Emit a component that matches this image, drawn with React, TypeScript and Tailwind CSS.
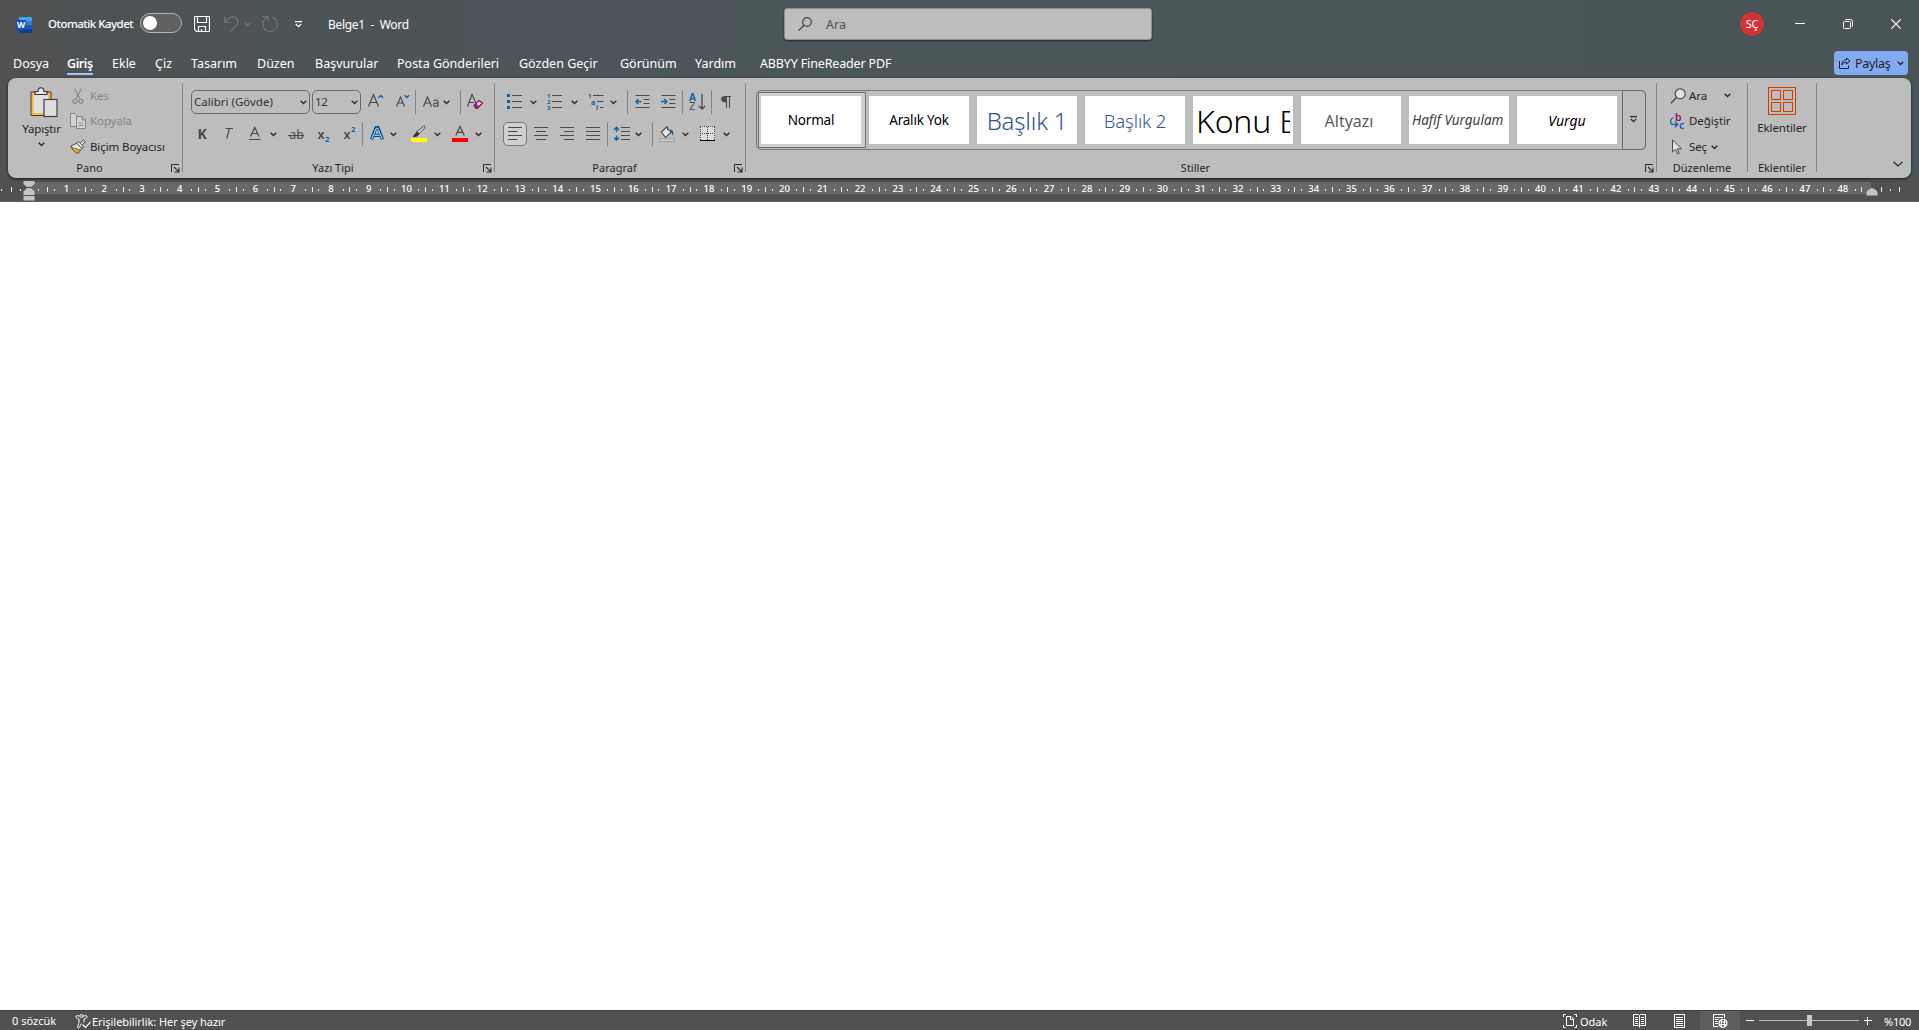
import React from 'react';

const INK = '#4a4a4a';
const BLUE = '#0f64a8';

interface ChevronProps {
    className?: string;
    color?: string;
}

const Chevron: React.FC<ChevronProps> = ({ className = '', color = '#2b2b2b' }) => (
    <svg width="7" height="5" viewBox="0 0 7 5" className={`shrink-0 ${className}`}>
        <path d="M0.7 0.8 L3.5 3.6 L6.3 0.8" fill="none" stroke={color} strokeWidth="1.4" />
    </svg>
);

const Separator: React.FC<{ className?: string }> = ({ className = '' }) => (
    <div className={`h-6 w-px shrink-0 bg-[#858585] ${className}`} />
);

const Launcher: React.FC = () => (
    <svg width="9" height="9" viewBox="0 0 9 9" className="shrink-0">
        <path d="M0.5 8 V0.5 H8" fill="none" stroke="#2b2b2b" />
        <path d="M3 3 L7.5 7.5 M8 3.5 V8 H3.5" fill="none" stroke="#2b2b2b" strokeWidth="1.1" />
    </svg>
);

interface GlyphProps {
    w: number;
    className?: string;
    children: React.ReactNode;
}

// Every toolbar glyph is drawn on a 24px tall row
const Glyph: React.FC<GlyphProps> = ({ w, className = '', children }) => (
    <svg
        width={w}
        height="24"
        viewBox={`0 0 ${w} 24`}
        fill="none"
        className={`shrink-0 overflow-visible ${className}`}
    >
        {children}
    </svg>
);

const TitleBar: React.FC = () => (
    <div className="flex h-12 items-center text-white">
        <svg width="16" height="16" viewBox="0 0 16 16" className="ml-4 mt-px shrink-0">
            <rect x="3" y="0" width="13" height="16" rx="1" fill="#185abd" />
            <path d="M4 0 H15 a1 1 0 0 1 1 1 V4 H3 V1 a1 1 0 0 1 1-1" fill="#41a5ee" />
            <rect x="3" y="4" width="13" height="4" fill="#2b7cd3" />
            <path d="M3 12 H16 V15 a1 1 0 0 1 -1 1 H4 a1 1 0 0 1 -1-1" fill="#103f91" />
            <rect x="0" y="3" width="10" height="10" rx="1" fill="#1a4fae" />
            <text x="5" y="11" fontSize="8.5" fontWeight="700" fill="#fff" textAnchor="middle">W</text>
        </svg>
        <span className="ml-4 w-[92px] whitespace-nowrap text-[11.5px] font-medium tracking-[-0.52px]">Otomatik Kaydet</span>
        <div className="mt-[-2px] flex h-5 w-[42px] items-center rounded-full border border-[#b5b5b5] bg-[#5f6062] pl-[2px]">
            <div className="h-[14px] w-[14px] rounded-full bg-white" />
        </div>
        <svg width="16" height="16" viewBox="0 0 16 16" fill="none" stroke="#fff" className="ml-3">
            <path d="M0.5 0.5 H15.5 V15.5 H2.5 L0.5 13.5 Z" strokeWidth="1.2" />
            <path d="M3.5 0.5 V6.5 H12.5 V0.5 M4.5 15.5 V10.5 H11.5 V15.5 M7.5 13 V15.5" strokeWidth="1.2" />
        </svg>
        <svg width="15" height="16" viewBox="0 0 15 16" fill="none" stroke="#707476" strokeWidth="1.2" className="ml-[14px]">
            <path d="M0.6 0.5 V6.5 H6.5 M0.6 6.3 L5 2.2 C8 -0.3 13.5 1 13.8 5 C14 9 10 12 6.8 15.5" />
        </svg>
        <Chevron className="ml-[5px]" color="#707476" />
        <svg width="16" height="16" viewBox="0 0 16 16" fill="none" stroke="#707476" strokeWidth="1.2" className="ml-[11px]">
            <path d="M0.5 0.6 H6 V6 M5.8 1.2 C-0.5 3.5 -0.5 12.5 5.5 15 C11 17 16 12.5 15.3 7.5 C15 4.5 12.8 2.2 10.5 1.3" />
        </svg>
        <svg width="7" height="7" viewBox="0 0 7 7" fill="none" stroke="#fff" strokeWidth="1.2" className="ml-[17px]">
            <path d="M0 0.6 H7 M0.8 3 L3.5 5.6 L6.2 3" />
        </svg>
        <span className="ml-[26px] mt-[2px] w-[456px] whitespace-pre text-xs tracking-[-0.3px]">Belge1  -  Word</span>
        <div className="flex h-8 w-[368px] items-center rounded-[3px] border border-[#8b8f90] bg-[#bdbdbd] shadow-[0_1px_2px_rgba(0,0,0,0.5)]">
            <svg width="14" height="14" viewBox="0 0 14 14" fill="none" stroke="#444" strokeWidth="1.2" className="ml-[13px]">
                <circle cx="9" cy="5" r="4.3" />
                <path d="M6 8.2 L0.5 13.6" />
            </svg>
            <span className="ml-[14px] mt-[2px] text-[12.5px] text-[#4f4f4f]">Ara</span>
        </div>
        <div className="ml-auto mr-[31px] flex h-6 w-6 items-center justify-center rounded-full bg-[#d13438] text-[11px] tracking-[-0.3px]">SÇ</div>
        <svg width="10" height="10" viewBox="0 0 10 10" className="mr-[38px]">
            <path d="M0 4.5 H10" stroke="#fff" />
        </svg>
        <svg width="10" height="10" viewBox="0 0 10 10" fill="none" stroke="#fff" className="mr-[38px]">
            <rect x="0.5" y="2.5" width="7" height="7" rx="1" />
            <path d="M2.5 0.5 H7.5 a2 2 0 0 1 2 2 V7.5" />
        </svg>
        <svg width="10" height="10" viewBox="0 0 10 10" className="mr-[18px]">
            <path d="M0.3 0.3 L9.7 9.7 M9.7 0.3 L0.3 9.7" stroke="#fff" strokeWidth="1.1" />
        </svg>
    </div>
);

const TABS = [
    { label: 'Dosya', cls: 'w-[54px]' },
    { label: 'Giriş', cls: 'w-[45px]', active: true },
    { label: 'Ekle', cls: 'w-[43px]' },
    { label: 'Çiz', cls: 'w-[36px]' },
    { label: 'Tasarım', cls: 'w-[66px]' },
    { label: 'Düzen', cls: 'w-[58px]' },
    { label: 'Başvurular', cls: 'w-[82px]' },
    { label: 'Posta Gönderileri', cls: 'w-[122px]' },
    { label: 'Gözden Geçir', cls: 'w-[101px]' },
    { label: 'Görünüm', cls: 'w-[75px]' },
    { label: 'Yardım', cls: 'w-[65px]' },
    { label: 'ABBYY FineReader PDF', cls: 'w-[160px] tracking-[-0.15px]' },
];

const TabBar: React.FC = () => (
    <div className="flex h-[30px] items-start pl-[13px] pr-[11px] text-white">
        {TABS.map((tab) => (
            <div key={tab.label} className={`flex shrink-0 pt-[5px] ${tab.cls}`}>
                <div className={`h-[22px] whitespace-nowrap text-[12.5px] leading-[22px] ${tab.active ? 'border-b-2 border-[#a9c1f0] font-semibold tracking-[-0.4px]' : ''}`}>
                    {tab.label}
                </div>
            </div>
        ))}
        <div className="ml-auto mt-[3px] flex h-6 w-[74px] items-center rounded bg-[#84aaf2] text-[#1f1f1f]">
            <svg width="12" height="12" viewBox="0 0 12 12" fill="none" stroke="#1f1f1f" className="ml-[5px]">
                <path d="M0.5 4 V11.5 H9.5 V8.5" />
                <path d="M7.5 1 L11 4 L7.5 7 V5.3 C5.5 5.2 4 6 2.8 8 C3 5 4.6 2.9 7.5 2.7 Z" />
            </svg>
            <span className="ml-1 mt-[2px] w-[42px] text-[12.5px] tracking-[-0.3px]">Paylaş</span>
            <Chevron />
        </div>
    </div>
);

interface GroupProps {
    label: string;
    className: string;
    launcher?: boolean;
    children: React.ReactNode;
}

const Group: React.FC<GroupProps> = ({ label, className, launcher, children }) => (
    <div className={`flex shrink-0 pt-[5px] ${className}`}>
        <div className="flex min-w-0 flex-1 flex-col">
            <div className="h-[78px]">{children}</div>
            <div className={`flex h-[14px] items-center ${launcher ? 'pr-[2px]' : ''}`}>
                <div className="flex-1 text-center text-[11px] leading-[14px]">{label}</div>
                {launcher && <Launcher />}
            </div>
        </div>
        <div className="h-[89px] w-px bg-[#858585]" />
    </div>
);

const ClipboardGroup: React.FC = () => (
    <Group label="Pano" className="w-[175px]" launcher>
        <div className="flex">
            <div className="ml-[10px] flex w-[47px] flex-col items-center pt-1">
                <svg width="28" height="31" viewBox="0 0 28 31" className="ml-[5px]">
                    <path d="M1 5 H21 V28.5 H1 Z" fill="#f5be55" stroke="#4a3a1a" />
                    <path d="M4 7 H18 V26 H4 Z" fill="#e0e0e0" />
                    <path d="M5 7.5 V4.5 H8 C8.3 -0.5 13.7 -0.5 14 4.5 H17 V7.5 Z" fill="#e6e6e6" stroke="#333" strokeWidth="1.2" />
                    <rect x="14" y="12.5" width="13" height="17" fill="#dedede" stroke="#3f3f3f" strokeWidth="1.2" />
                </svg>
                <span className="mt-[3px] text-[11.5px] leading-[16px] tracking-[-0.15px]">Yapıştır</span>
                <Chevron className="mt-[5px]" />
            </div>
            <div className="ml-[5px] flex flex-col text-[11.5px] tracking-[-0.1px]">
                <div className="flex h-[25px] items-center text-[#868686]">
                    <svg width="16" height="16" viewBox="0 0 16 16" fill="none" stroke="#868686" strokeWidth="1.1">
                        <path d="M4.5 0.5 L10 11 M11.5 0.5 L6 11" />
                        <circle cx="5" cy="13.3" r="2" />
                        <circle cx="11" cy="13.3" r="2" />
                    </svg>
                    <span className="ml-1">Kes</span>
                </div>
                <div className="flex h-[26px] items-center text-[#868686]">
                    <svg width="16" height="16" viewBox="0 0 16 16" fill="#d2d2d2" stroke="#868686">
                        <path d="M0.5 0.5 H4.5 L6.5 2.5 V13.5 H0.5 Z" />
                        <path d="M6.5 3.5 H12 L15.5 7 V15.5 H6.5 Z M12 3.5 V7 H15.5" />
                        <path d="M8.5 10 H13.5 M8.5 12.5 H13.5" />
                    </svg>
                    <span className="ml-1">Kopyala</span>
                </div>
                <div className="flex h-[26px] items-center">
                    <svg width="16" height="16" viewBox="0 0 16 16">
                        <path d="M0.8 7 L7 4.2 L12 9.5 L8 14.5 C5 13.5 2.5 10.5 0.8 7 Z" fill="#e8e8e8" stroke="#4a4a4a" />
                        <path d="M1.5 8.2 C5 9.8 7.5 10 10.3 11 L8 14.5 C5 13.5 3 11.5 1.5 8.2 Z" fill="#e8ae3c" stroke="#6a4c10" strokeWidth="0.8" />
                        <path d="M6.5 4.2 L8.5 2.7 L13.5 7.7 L12 9.5 Z" fill="#f0f0f0" stroke="#4a4a4a" />
                        <path d="M10.2 4 L13.5 0.8 L15.4 2.6 L12.2 6" fill="#ddd" stroke="#4a4a4a" />
                    </svg>
                    <span className="ml-1 whitespace-nowrap">Biçim Boyacısı</span>
                </div>
            </div>
        </div>
    </Group>
);

const FontGroup: React.FC = () => (
    <Group label="Yazı Tipi" className="w-[312px]" launcher>
        <div className="flex pl-2 pt-[7px]">
            <div className="flex h-6 w-[119px] items-center justify-between rounded-[5px] border border-[#6a6a6a] pl-[2px] pr-[2px] text-[11.5px] text-[#333]">
                Calibri (Gövde)
                <Chevron />
            </div>
            <div className="ml-[2px] flex h-6 w-[49px] items-center justify-between rounded-[5px] border border-[#6a6a6a] pl-[2px] pr-[2px] text-[11.5px] tracking-[-0.3px] text-[#333]">
                12
                <Chevron />
            </div>
            <Glyph w={16} className="ml-[7px]">
                <path d="M0.5 16.5 L5.5 4.5 L10.5 16.5 M2.3 12.5 H8.7" stroke={INK} strokeWidth="1.2" />
                <path d="M10.5 7.8 L12.8 5.5 L15 7.8" stroke={BLUE} strokeWidth="1.4" />
            </Glyph>
            <Glyph w={14} className="ml-3">
                <path d="M0.5 16.5 L4.5 7 L8.5 16.5 M2 13 H7" stroke={INK} strokeWidth="1.2" />
                <path d="M8.5 5.3 L10.8 7.6 L13 5.3" stroke={BLUE} strokeWidth="1.4" />
            </Glyph>
            <Separator className="ml-[5px]" />
            <Glyph w={16} className="ml-[7px]">
                <path d="M0.5 16.5 L4.5 7 L8.5 16.5 M2 13 H7" stroke={INK} strokeWidth="1.2" />
                <path d="M10.5 10.8 C12.5 9.3 15 9.8 15 12 V16.5 M15 12.9 C12 12.9 10.3 13.3 10.4 15 C10.6 17 14.4 16.8 15 14.3" stroke={INK} strokeWidth="1.1" />
            </Glyph>
            <Chevron className="ml-1 mt-[10px]" />
            <Separator className="ml-[10px]" />
            <Glyph w={16} className="ml-[6px]">
                <path d="M0.5 16.5 L5 4.5 L9 13 M2.3 12.5 H7" stroke={INK} strokeWidth="1.2" />
                <path d="M7 15.5 L12 10.5 L15.5 13 L10.5 18.3 H9 Z" fill="#e2d3dc" stroke="#8c1460" strokeWidth="1.3" />
                <path d="M7 15.5 L9 13.5 L12.3 16.5 L10.5 18.3 H9 Z" fill="#a02070" />
            </Glyph>
        </div>
        <div className="flex pl-[15px] pt-2">
            <Glyph w={8}>
                <text x="-0.5" y="17" fontSize="14" fontWeight="700" fill={INK}>K</text>
            </Glyph>
            <Glyph w={9} className="ml-[18px]">
                <path d="M1.5 6.5 H9 M5.3 6.5 L2.8 16.5" stroke={INK} strokeWidth="1.2" />
            </Glyph>
            <Glyph w={12} className="ml-4">
                <path d="M1.5 14.5 L5.8 5.5 L10 14.5 M3 11.5 H8.7" stroke={INK} strokeWidth="1.2" />
                <path d="M0 17.5 H11.5" stroke={INK} />
            </Glyph>
            <Chevron className="ml-[9px] mt-[10px]" />
            <Glyph w={16} className="ml-[11px]">
                <text x="1.2" y="17" fontSize="12.5" fill={INK}>ab</text>
                <path d="M0 13.5 H16" stroke={INK} />
            </Glyph>
            <Glyph w={12} className="ml-[14px]">
                <text x="-0.5" y="17" fontSize="12.5" fontWeight="600" fill={INK}>x</text>
                <text x="7" y="19.5" fontSize="7.5" fontWeight="700" fill={BLUE}>2</text>
            </Glyph>
            <Glyph w={12} className="ml-[14px]">
                <text x="-0.5" y="17" fontSize="12.5" fontWeight="600" fill={INK}>x</text>
                <text x="7" y="9.5" fontSize="7.5" fontWeight="700" fill={BLUE}>2</text>
            </Glyph>
            <Separator className="ml-[6px]" />
            <Glyph w={14} className="ml-[7px]">
                <path d="M1.5 17.3 L6 5.7 H8 L12.5 17.3 M4 13.3 H10" stroke="#a9d2f0" strokeWidth="4.5" />
                <path d="M1.5 17.3 L6 5.7 H8 L12.5 17.3 M4 13.3 H10" stroke="#0b4a80" strokeWidth="3.2" />
                <path d="M1.8 16.8 L6.3 6.2 H7.7 L12.2 16.8 M4.3 13.3 H9.7" stroke="#cfe5f6" strokeWidth="1" />
            </Glyph>
            <Chevron className="ml-[6px] mt-[10px]" />
            <Glyph w={16} className="ml-[14px]">
                <rect x="0" y="16" width="16" height="4" fill="#ffff00" />
                <path d="M6 9.5 L12.5 4.3 C14 3.5 14.5 5 13.5 6 L8 12 Z" fill="#d8d8d8" stroke={INK} />
                <path d="M6.2 9.7 L8 12 C7 14 5 15 2 14.5 C4 13.5 3.8 11 6.2 9.7 Z" fill="#333" stroke="#333" strokeWidth="0.8" />
            </Glyph>
            <Chevron className="ml-[7px] mt-[10px]" />
            <Glyph w={16} className="ml-[11px]">
                <path d="M3.8 13.5 L8 4.5 L12.3 13.5 M5.3 10.3 H10.8" stroke={INK} strokeWidth="1.2" />
                <rect x="0" y="16" width="16" height="4" fill="#ff0000" />
            </Glyph>
            <Chevron className="ml-[7px] mt-[10px]" />
        </div>
    </Group>
);

const ParagraphGroup: React.FC = () => (
    <Group label="Paragraf" className="w-[251px]" launcher>
        <div className="flex pl-3 pt-[7px]">
            <Glyph w={16}>
                <path d="M0 4 h3 v3 h-3 Z M0 10 h3 v3 h-3 Z M0 16 h3 v3 h-3 Z" fill={BLUE} />
                <path d="M5 5.5 H15 M5 11.5 H15 M5 17.5 H15" stroke={INK} />
            </Glyph>
            <Chevron className="ml-[7px] mt-[10px]" />
            <Glyph w={16} className="ml-[10px]">
                <text x="0" y="8" fontSize="6" fontWeight="700" fill={BLUE}>1</text>
                <text x="0" y="14" fontSize="6" fontWeight="700" fill={BLUE}>2</text>
                <text x="0" y="20" fontSize="6" fontWeight="700" fill={BLUE}>3</text>
                <path d="M5 5.5 H15 M5 11.5 H15 M5 17.5 H15" stroke={INK} />
            </Glyph>
            <Chevron className="ml-2 mt-[10px]" />
            <Glyph w={16} className="ml-[10px]">
                <text x="0" y="8" fontSize="6" fontWeight="700" fill={BLUE}>1</text>
                <text x="3" y="14.5" fontSize="7" fontWeight="700" fill={BLUE}>a</text>
                <text x="8" y="20" fontSize="7" fontWeight="700" fill={BLUE}>i</text>
                <path d="M5 5.5 H15.5 M9 11.5 H15.5 M12 17.5 H15.5" stroke={INK} />
            </Glyph>
            <Chevron className="ml-[6px] mt-[10px]" />
            <Separator className="ml-[10px]" />
            <Glyph w={15} className="ml-[7px]">
                <path d="M0.5 5.5 H14.5 M8.5 9.5 H14.5 M8.5 13.5 H14.5 M0.5 17.5 H14.5" stroke={INK} />
                <path d="M6.5 11.5 H0.8 M3.3 9 L0.8 11.5 L3.3 14" stroke={BLUE} strokeWidth="1.3" />
            </Glyph>
            <Glyph w={15} className="ml-[11px]">
                <path d="M0.5 5.5 H14.5 M8.5 9.5 H14.5 M8.5 13.5 H14.5 M0.5 17.5 H14.5" stroke={INK} />
                <path d="M0 11.5 H5.8 M3.3 9 L5.8 11.5 L3.3 14" stroke={BLUE} strokeWidth="1.3" />
            </Glyph>
            <Separator className="ml-[6px]" />
            <Glyph w={17} className="ml-[6px]">
                <text x="0" y="11" fontSize="10" fontWeight="700" fill={BLUE}>A</text>
                <text x="0.2" y="20" fontSize="10.5" fill={INK}>Z</text>
                <path d="M13 4 V19 M10 16 L13 19 L16 16" stroke={INK} strokeWidth="1.3" />
            </Glyph>
            <Separator className="ml-[5px]" />
            <Glyph w={10} className="ml-[9px]">
                <path d="M5 6 V12.5 C-1.5 12.5 -1.5 6 4 6 Z" fill={INK} />
                <path d="M3.5 6.5 H10 M5.5 6 V18 M8.5 6 V18" stroke={INK} />
            </Glyph>
        </div>
        <div className="flex pl-2 pt-2">
            <div className="h-6 w-6 rounded-[5px] border border-[#787878] bg-[#d0d0d0]">
                <Glyph w={22} className="mt-[-1px]">
                    <path d="M4 5.5 H18 M4 9.5 H13.5 M4 13.5 H18 M4 17.5 H13.5" stroke={INK} />
                </Glyph>
            </div>
            <Glyph w={14} className="ml-[7px]">
                <path d="M0 5.5 H14 M2 9.5 H12 M0 13.5 H14 M2 17.5 H12" stroke={INK} />
            </Glyph>
            <Glyph w={14} className="ml-3">
                <path d="M0 5.5 H14 M4 9.5 H14 M0 13.5 H14 M4 17.5 H14" stroke={INK} />
            </Glyph>
            <Glyph w={14} className="ml-3">
                <path d="M0 5.5 H14 M0 9.5 H14 M0 13.5 H14 M0 17.5 H14" stroke={INK} />
            </Glyph>
            <Separator className="ml-[7px]" />
            <Glyph w={16} className="ml-[6px]">
                <path d="M2.5 5.5 V10 M2.5 13.5 V18 M0 8 L2.5 5.3 L5 8 M0 15.5 L2.5 18.2 L5 15.5" stroke={BLUE} strokeWidth="1.3" />
                <path d="M7 5.5 H16 M7 9.5 H16 M7 13.5 H16 M7 17.5 H16" stroke={INK} />
            </Glyph>
            <Chevron className="ml-[5px] mt-[10px]" />
            <Separator className="ml-[10px]" />
            <Glyph w={16} className="ml-[6px]">
                <path d="M2.5 10 L7.5 5 L12 10.5 L6.5 15.5 Z" fill="#e4e4e4" stroke={INK} strokeWidth="1.1" />
                <path d="M8.5 8 V4.5" stroke={INK} />
                <path d="M11.5 7.5 C14.5 8 14.8 11.5 14 14 C13 12 12.5 10.5 11 9 Z" fill={BLUE} />
                <rect x="0.5" y="17" width="15" height="2.5" fill="#d6d6d6" stroke="#999" />
            </Glyph>
            <Chevron className="ml-[7px] mt-[10px]" />
            <Glyph w={15} className="ml-[11px]">
                <rect x="0" y="4" width="15" height="15" fill="#dcdcdc" />
                <path d="M0.5 5 V18 M7.5 5 V18 M14.5 5 V18 M0 4.5 H15 M0 11.5 H15" stroke="#444" strokeDasharray="1 1" />
                <path d="M0 18.5 H15" stroke="#000" />
            </Glyph>
            <Chevron className="ml-2 mt-[10px]" />
        </div>
    </Group>
);

const STYLES = [
    { name: 'Normal', cls: 'text-[13.5px] tracking-[-0.2px] text-black justify-center' },
    { name: 'Aralık Yok', cls: 'text-[13.5px] tracking-[-0.2px] text-black justify-center' },
    { name: 'Başlık 1', cls: 'text-[24px] tracking-[-0.2px] font-light text-[#2f5496] justify-center' },
    { name: 'Başlık 2', cls: 'text-[18.5px] tracking-[-0.1px] font-light text-[#2f5496] justify-center' },
    { name: 'Konu B', cls: 'text-[32px] tracking-[-0.2px] font-light text-black' },
    { name: 'Altyazı', cls: 'text-[16px] text-[#5a5a5a] justify-center pr-1' },
    { name: 'Hafif Vurgulam', cls: 'text-[13.5px] italic text-[#404040]' },
    { name: 'Vurgu', cls: 'text-[14px] italic text-black justify-center' },
];

const StylesGroup: React.FC = () => (
    <Group label="Stiller" className="w-[911px]" launcher>
        <div className="pl-[10px] pt-[7px]">
            <div className="flex h-[60px] w-[890px] rounded-[5px] border border-[#7b7b7b] pl-px">
                {STYLES.map((style, i) => (
                    <div
                        key={style.name}
                        className={`my-px h-14 w-[108px] shrink-0 pl-[3px] pt-[4px] ${i === 0 ? 'bg-[#cfcfcf] outline-1 -outline-offset-1 outline-[#6f6f6f]' : ''}`}
                    >
                        <div className="h-12 w-[100px] bg-white px-[3px]">
                            <div className={`flex h-full items-center overflow-hidden whitespace-nowrap pt-px ${style.cls}`}>
                                {style.name}
                            </div>
                        </div>
                    </div>
                ))}
                <div className="my-[-1px] ml-auto mr-[-1px] flex w-6 items-center justify-center rounded-r-[5px] border border-[#6a6a6a]">
                    <svg width="7" height="7" viewBox="0 0 7 7" fill="none" stroke="#2b2b2b" strokeWidth="1.2" className="mb-px mr-px">
                        <path d="M0 0.6 H7 M0.8 3 L3.5 5.6 L6.2 3" />
                    </svg>
                </div>
            </div>
        </div>
    </Group>
);

const EditingGroup: React.FC = () => (
    <Group label="Düzenleme" className="w-[91px]">
        <div className="flex flex-col pl-[13px] text-[11.5px] tracking-[-0.1px]">
            <div className="flex h-[25px] items-center">
                <svg width="16" height="16" viewBox="0 0 16 16" fill="none" stroke="#4a4a4a" strokeWidth="1.2">
                    <circle cx="10.2" cy="5.8" r="5" fill="#e0e0e0" />
                    <path d="M6.5 9.5 L0.8 15.2" strokeWidth="1.5" />
                </svg>
                <span className="ml-[3px] w-[35px]">Ara</span>
                <Chevron />
            </div>
            <div className="flex h-[26px] items-center">
                <svg width="16" height="16" viewBox="0 0 16 16" fill="none">
                    <text x="5" y="8" fontSize="10.5" fontWeight="600" fill="#8c1460">b</text>
                    <text x="9" y="15.5" fontSize="10.5" fontWeight="600" fill={BLUE}>c</text>
                    <path d="M3.5 4.5 C-0.5 6 -0.5 11.5 4 11.5 H7.5 M5 8.8 L7.8 11.5 L5 14.2" stroke={BLUE} strokeWidth="1.3" />
                </svg>
                <span className="ml-[3px]">Değiştir</span>
            </div>
            <div className="flex h-[26px] items-center">
                <svg width="16" height="16" viewBox="0 0 16 16">
                    <path d="M2.5 0.8 V13 L5.5 10.3 L7.5 15 L9.3 14.2 L7.3 9.8 H11.5 Z" fill="#e4e4e4" stroke="#4a4a4a" />
                </svg>
                <span className="ml-[3px] mr-1">Seç</span>
                <Chevron />
            </div>
        </div>
    </Group>
);

const AddinsGroup: React.FC = () => (
    <Group label="Eklentiler" className="w-[69px]">
        <div className="flex flex-col items-center pt-1">
            <svg width="28" height="28" viewBox="0 0 28 28" fill="none" stroke="#d83b01">
                <rect x="0.5" y="0.5" width="27" height="27" />
                <rect x="3.5" y="3.5" width="9" height="9" />
                <rect x="15.5" y="3.5" width="9" height="9" />
                <rect x="3.5" y="15.5" width="9" height="9" />
                <rect x="15.5" y="15.5" width="9" height="9" />
            </svg>
            <span className="mt-[5px] text-[11.5px] leading-4 tracking-[-0.1px]">Eklentiler</span>
        </div>
    </Group>
);

const Ribbon: React.FC = () => (
    <div className="relative z-10 mx-2 flex h-[100px] rounded-lg bg-[#bdbdbd] text-[#262626] shadow-[0_1px_3px_rgba(0,0,0,0.7)]">
        <ClipboardGroup />
        <FontGroup />
        <ParagraphGroup />
        <StylesGroup />
        <EditingGroup />
        <AddinsGroup />
        <svg width="10" height="6" viewBox="0 0 10 6" className="mb-[11px] ml-auto mr-2 self-end">
            <path d="M0.5 0.7 L5 5 L9.5 0.7" fill="none" stroke="#2b2b2b" strokeWidth="1.2" />
        </svg>
    </div>
);

const Dot: React.FC = () => <div className="h-[2px] w-px bg-[#e8e8e8]" />;
const Tick: React.FC = () => <div className="h-[5px] w-px bg-[#e8e8e8]" />;

const RULER_NUMBERS = Array.from({ length: 48 }, (_, i) => i + 1);

const Ruler: React.FC = () => (
    <div className="flex h-6 items-start border-b border-[#625b5c] bg-[#515151] pt-1">
        <div className="flex h-3 w-[29px] items-center justify-between pl-px pr-2 pt-[3px]">
            <Dot />
            <Tick />
            <Dot />
        </div>
        <div className="relative flex h-3 w-[1842px] items-center bg-[#686868] pt-[3px] text-white">
            <svg width="12" height="21" viewBox="0 0 12 21" className="absolute left-[-6px] top-[-2px]">
                <path d="M0.5 1 H11.5 V4 L7.5 7.5 L11.5 11.5 V15 H0.5 V11.5 L4.5 7.5 L0.5 4 Z M0.5 16 H11.5 V20.5 H0.5 Z" fill="#c4c4c4" />
                <path d="M4 7.5 H8" stroke="#444" />
            </svg>
            <div className="flex w-[18px] shrink-0 items-center pl-[9px]"><Dot /></div>
            {RULER_NUMBERS.map((n) => (
                <div key={n} className="flex w-[37.8px] shrink-0 items-center justify-between">
                    <Tick />
                    <Dot />
                    <span className="flex h-3 w-3 items-center justify-center pb-px text-[9.5px] font-medium leading-3">{n}</span>
                    <Dot />
                    <span className="w-0" />
                </div>
            ))}
            <Tick />
            <svg width="12" height="8" viewBox="0 0 12 8" className="absolute right-[-7px] top-[6px]">
                <path d="M6 0 C8 0.5 11.5 3 11.5 4.5 V7.5 H0.5 V4.5 C0.5 3 4 0.5 6 0 Z" fill="#c4c4c4" />
            </svg>
        </div>
        <div className="flex h-3 w-[29px] items-center justify-between pl-[10px] pt-[3px]">
            <Tick />
            <Dot />
            <Tick />
        </div>
        <div className="w-[19px]" />
    </div>
);

const StatusBar: React.FC = () => (
    <div className="flex h-5 items-center border-t border-[#3f3f3f] bg-[#515151] text-[11px] text-white">
        <span className="ml-3 mt-px w-[63px] whitespace-nowrap">0 sözcük</span>
        <svg width="16" height="15" viewBox="0 0 16 15" fill="none" stroke="#fff" className="mt-px">
            <circle cx="6.5" cy="2" r="1.5" />
            <path d="M5 2 C3.5 2.3 2 1 1 2.2 C0.3 3.5 1.5 4.2 4 5 C4.5 8 3 11 2.5 13.3 C3 15 4.3 14 5 12 L6.5 9.5 M8 2 C9.5 2.3 11 1 12 2.2 C12.7 3.5 11.5 4.2 9 5 V8.5" />
            <path d="M7.5 10.5 L10.5 13.5 L15.5 8" strokeWidth="1.2" />
        </svg>
        <span className="ml-px mt-[3px] whitespace-nowrap tracking-[-0.05px]">Erişilebilirlik: Her şey hazır</span>
        <svg width="14" height="14" viewBox="0 0 14 14" fill="none" stroke="#fff" className="ml-auto">
            <path d="M2.5 0.5 H0.5 V3 M0.5 11 V13.5 H2.5 M11.5 0.5 H13.5 V3 M13.5 11 V13.5 H11.5" />
            <path d="M3.5 2.5 H8 L10.5 5 V11.5 H3.5 Z M7.5 2.5 V5.5 H10.5" />
        </svg>
        <span className="ml-[3px] mt-[3px] w-[53px]">Odak</span>
        <svg width="13" height="14" viewBox="0 0 13 14" fill="none" stroke="#fff">
            <path d="M6.5 1.5 V13.5 M0.5 0.5 H5.5 L6.5 1.5 L7.5 0.5 H12.5 V11.5 H7.5 L6.5 12.5 L5.5 11.5 H0.5 Z" />
            <path d="M2 3.5 H5 M2 5.5 H5 M2 7.5 H5 M2 9.5 H5 M8 3.5 H11 M8 5.5 H11 M8 7.5 H11 M8 9.5 H11" />
        </svg>
        <svg width="11" height="14" viewBox="0 0 11 14" fill="none" stroke="#fff" className="ml-7 mr-[15px]">
            <rect x="0.5" y="0.5" width="10" height="13" />
            <path d="M2 3.5 H9 M2 5.5 H9 M2 7.5 H9 M2 9.5 H9 M2 11.5 H9" />
        </svg>
        <div className="flex h-full w-10 items-center bg-[#5e5e5e] pl-[13px]">
            <svg width="15" height="14" viewBox="0 0 15 14" fill="none" stroke="#fff">
                <path d="M5.5 12.5 H0.5 V0.5 H11.5 V4 M2 3.5 H10 M2 5.5 H6 M2 7.5 H5 M2 9.5 H5" />
                <circle cx="10" cy="9.3" r="4" strokeWidth="1.2" />
                <path d="M8.5 5.5 V13 M11.5 5.5 V13 M6 8 H14 M6 10.5 H14" />
            </svg>
        </div>
        <div className="ml-[6px] h-px w-2 bg-white" />
        <div className="ml-[5px] flex h-[11px] w-[100px] items-center bg-[linear-gradient(#bdbdbd,#bdbdbd)] bg-[length:100%_1px] bg-center bg-no-repeat pl-[48px]">
            <div className="h-[11px] w-[5px] bg-[#c8c8c8]" />
        </div>
        <svg width="8" height="8" viewBox="0 0 8 8" className="ml-[5px]">
            <path d="M0 3.5 H8 M3.5 0 V8" stroke="#fff" />
        </svg>
        <span className="ml-3 mt-[3px] w-[35px] tracking-[-0.2px]">%100</span>
    </div>
);

export default function App() {
    return (
        <div className="flex h-[1030px] w-[1919px] flex-col overflow-hidden bg-white font-['Noto_Sans','Open_Sans',sans-serif]">
            <div className="bg-[linear-gradient(90deg,#505152_0,#4d5356_200px,#4c555a_600px,#4a5658_850px,#4a5557_100%)]">
                <TitleBar />
                <TabBar />
                <Ribbon />
                <Ruler />
            </div>
            <div className="flex-1 bg-white" />
            <StatusBar />
        </div>
    );
}
